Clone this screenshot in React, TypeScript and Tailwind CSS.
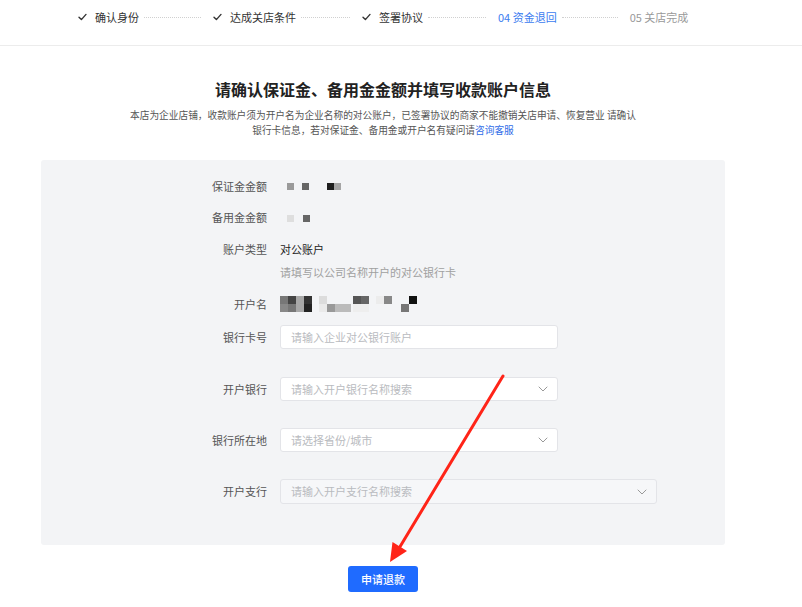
import React from "react";

const Check = () => (
  <svg width="9" height="8" viewBox="0 0 9 8" className="mr-[8px]">
    <path d="M1 4.2 L3.4 6.6 L8 1.4" fill="none" stroke="#333" strokeWidth="1.4" strokeLinecap="round" strokeLinejoin="round" />
  </svg>
);

const Dots = ({ w }: { w: string }) => (
  <div className={`${w} ml-[5px] mr-[12px] border-t border-dotted border-[#d0d0d0] h-0`} />
);

const Chevron = () => (
  <svg width="10" height="6" viewBox="0 0 10 6">
    <path d="M1 1 L5 5 L9 1" fill="none" stroke="#999" strokeWidth="1" strokeLinecap="round" strokeLinejoin="round" />
  </svg>
);

const Row = ({ label, className, children }: { label: string; className: string; children?: React.ReactNode }) => (
  <div className={`flex items-center ${className}`}>
    <div className="w-[239px] pr-[13px] text-right text-[11px] text-[#555] shrink-0">{label}</div>
    <div className="flex items-center h-full">{children}</div>
  </div>
);

const Input = ({ ph, w, select, disabled }: { ph: string; w: string; select?: boolean; disabled?: boolean }) => (
  <div
    className={`${w} h-full flex items-center justify-between pl-[10px] pr-[9px] rounded-[3px] border border-[#e3e4e8] ${
      disabled ? "bg-[#f6f7f9]" : "bg-white"
    }`}
  >
    <span className="text-[11px] text-[#b9bbc0]">{ph}</span>
    {select && <Chevron />}
  </div>
);

export default function App() {
  return (
    <div className="relative w-[802px] h-[607px] bg-white overflow-hidden font-['Noto_Sans_CJK_SC',sans-serif]">
      {/* stepper */}
      <div className="h-[46px] border-b border-[#ececec]">
        <div className="flex items-center pl-[78px] pt-[8px] h-[18px] box-content text-[11px] leading-[16px]">
          <Check />
          <span className="text-[#333]">确认身份</span>
          <Dots w="w-[57px]" />
          <Check />
          <span className="text-[#333]">达成关店条件</span>
          <Dots w="w-[49px]" />
          <Check />
          <span className="text-[#333]">签署协议</span>
          <Dots w="w-[58px]" />
          <span className="text-[#3b7cf0]">04 资金退回</span>
          <Dots w="w-[56px]" />
          <span className="text-[#999]">05 关店完成</span>
        </div>
      </div>

      <div className="ml-[41px] w-[684px]">
        <div className="mt-[32px] text-center text-[16px] leading-[22px] font-bold text-[#222]">
          请确认保证金、备用金金额并填写收款账户信息
        </div>
        <div className="mt-[8px] text-center text-[9.7px] leading-[15px] text-[#555]">
          本店为企业店铺，收款账户须为开户名为企业名称的对公账户，已签署协议的商家不能撤销关店申请、恢复营业 请确认
          <br />
          银行卡信息，若对保证金、备用金或开户名有疑问请<span className="text-[#2f6de8]">咨询客服</span>
        </div>

        <div className="mt-[22px] bg-[#f3f4f6] rounded-[3px] pt-[16px] pb-[41px]">
          <Row label="保证金金额" className="h-[20px]">
            <svg width="60" height="8" viewBox="0 0 60 8" className="ml-[7px] mt-[2px]">
              <rect x="0" y="0" width="7" height="7" fill="#9a9a9a" />
              <rect x="15" y="0" width="7" height="7" fill="#666" />
              <rect x="40" y="0" width="7" height="7" fill="#1e1e1e" />
              <rect x="47" y="0" width="7" height="7" fill="#a5a5a5" />
            </svg>
          </Row>
          <Row label="备用金金额" className="h-[20px] mt-[11px]">
            <svg width="30" height="8" viewBox="0 0 30 8" className="ml-[7px] mt-[4px]">
              <rect x="0" y="0" width="7" height="7" fill="#dedede" />
              <rect x="16" y="0" width="7" height="7" fill="#666" />
            </svg>
          </Row>
          <Row label="账户类型" className="h-[20px] mt-[12px]">
            <span className="text-[11px] text-[#222]">对公账户</span>
          </Row>
          <div className="h-[16px] mt-[5px] pl-[239px] text-[11px] leading-[16px] text-[#a0a0a0]">
            请填写以公司名称开户的对公银行卡
          </div>
          <Row label="开户名" className="h-[20px] mt-[14px]">
            <svg width="140" height="18" viewBox="0 0 140 18">
              <rect x="0" y="1" width="8" height="8" fill="#777" />
              <rect x="0" y="9" width="8" height="8" fill="#888" />
              <rect x="8" y="1" width="8" height="8" fill="#444" />
              <rect x="8" y="9" width="8" height="8" fill="#777" />
              <rect x="16" y="1" width="8" height="16" fill="#a8a8a8" />
              <rect x="24" y="1" width="8" height="8" fill="#333" />
              <rect x="24" y="9" width="8" height="8" fill="#222" />
              <rect x="39" y="1" width="8" height="8" fill="#dcdcdc" />
              <rect x="39" y="9" width="8" height="8" fill="#eaeaea" />
              <rect x="47" y="9" width="8" height="8" fill="#999" />
              <rect x="55" y="9" width="16" height="8" fill="#bbb" />
              <rect x="73" y="1" width="8" height="8" fill="#555" />
              <rect x="81" y="1" width="8" height="8" fill="#666" />
              <rect x="73" y="9" width="16" height="8" fill="#eeeeee" />
              <rect x="96" y="1" width="8" height="8" fill="#ececec" />
              <rect x="104" y="1" width="8" height="8" fill="#888" />
              <rect x="121" y="9" width="8" height="8" fill="#777" />
              <rect x="129" y="1" width="8" height="8" fill="#111" />
            </svg>
          </Row>
          <Row label="银行卡号" className="h-[24px] mt-[11px]">
            <Input ph="请输入企业对公银行账户" w="w-[278px]" />
          </Row>
          <Row label="开户银行" className="h-[24px] mt-[28px]">
            <Input ph="请输入开户银行名称搜索" w="w-[278px]" select />
          </Row>
          <Row label="银行所在地" className="h-[24px] mt-[27px]">
            <Input ph="请选择省份/城市" w="w-[278px]" select />
          </Row>
          <Row label="开户支行" className="h-[25px] mt-[27px]">
            <Input ph="请输入开户支行名称搜索" w="w-[377px]" select disabled />
          </Row>
        </div>

        <div className="flex justify-center mt-[21px]">
          <button className="w-[70px] h-[26px] rounded-[3px] bg-[#1f6bff] text-white text-[11px] font-medium">
            申请退款
          </button>
        </div>
      </div>

      {/* red annotation arrow */}
      <svg className="absolute left-0 top-0 pointer-events-none" width="802" height="607" viewBox="0 0 802 607">
        <line x1="503" y1="376" x2="398" y2="550" stroke="#ff2418" strokeWidth="3" strokeLinecap="round" />
        <polygon points="390,562 392.5,542 407,551" fill="#ff2418" />
      </svg>
    </div>
  );
}
